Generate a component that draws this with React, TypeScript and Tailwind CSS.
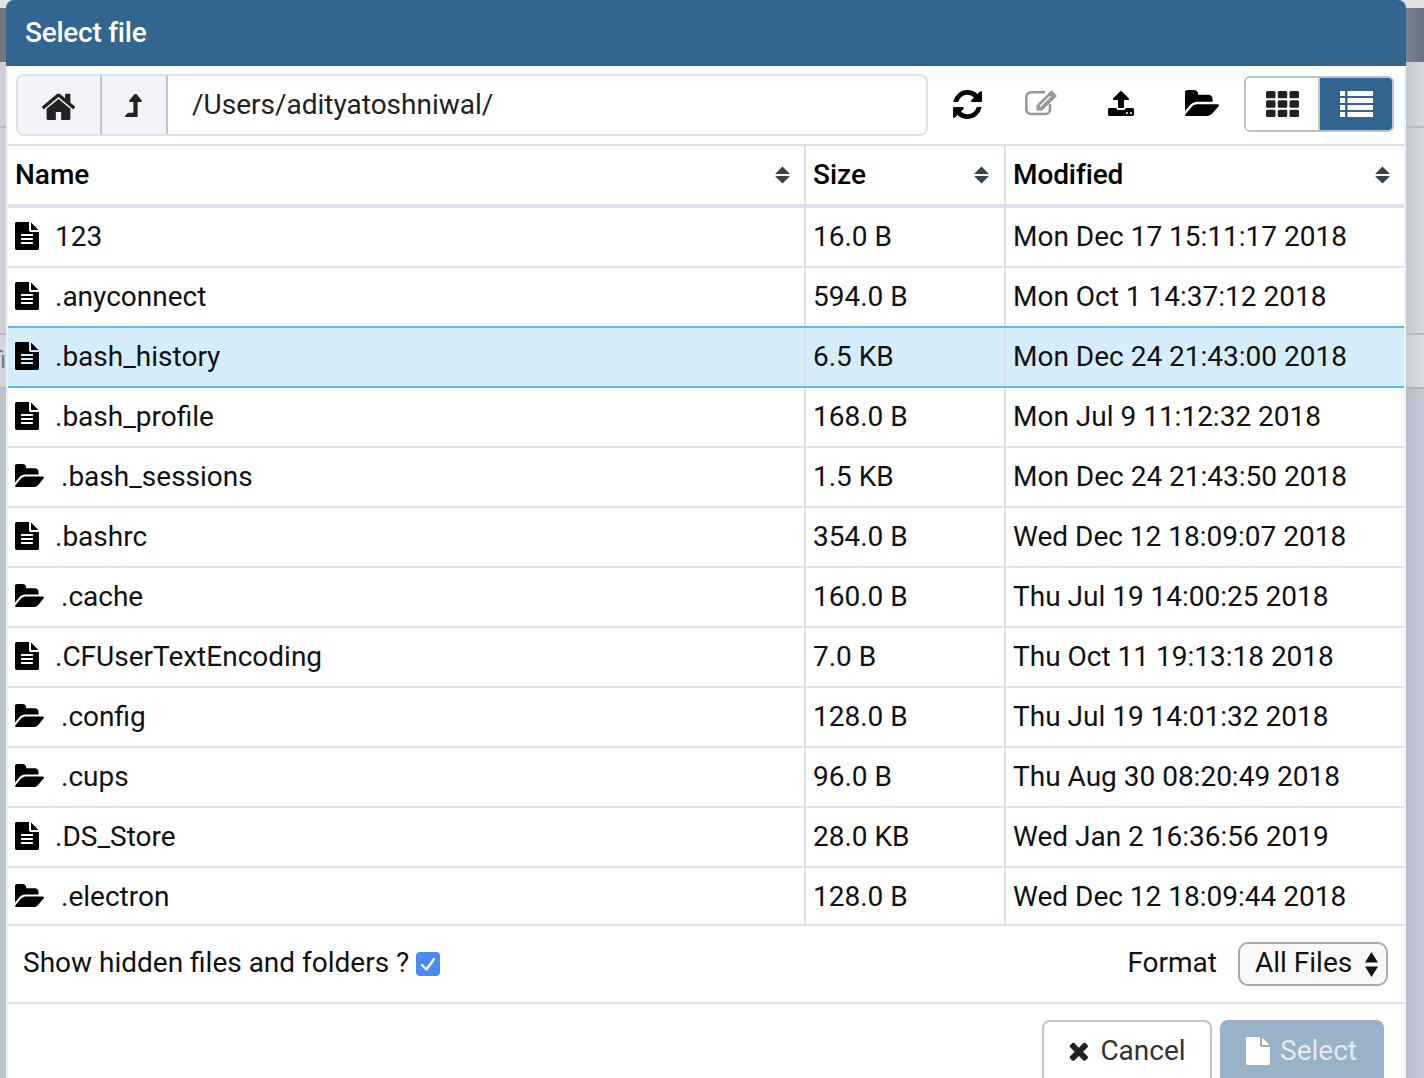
import React from 'react';
import clsx from 'clsx';

type Row = { name: string; size: string; modified: string; folder?: boolean; selected?: boolean };

const rows: Row[] = [
  { name: '123', size: '16.0 B', modified: 'Mon Dec 17 15:11:17 2018' },
  { name: '.anyconnect', size: '594.0 B', modified: 'Mon Oct 1 14:37:12 2018' },
  { name: '.bash_history', size: '6.5 KB', modified: 'Mon Dec 24 21:43:00 2018', selected: true },
  { name: '.bash_profile', size: '168.0 B', modified: 'Mon Jul 9 11:12:32 2018' },
  { name: '.bash_sessions', size: '1.5 KB', modified: 'Mon Dec 24 21:43:50 2018', folder: true },
  { name: '.bashrc', size: '354.0 B', modified: 'Wed Dec 12 18:09:07 2018' },
  { name: '.cache', size: '160.0 B', modified: 'Thu Jul 19 14:00:25 2018', folder: true },
  { name: '.CFUserTextEncoding', size: '7.0 B', modified: 'Thu Oct 11 19:13:18 2018' },
  { name: '.config', size: '128.0 B', modified: 'Thu Jul 19 14:01:32 2018', folder: true },
  { name: '.cups', size: '96.0 B', modified: 'Thu Aug 30 08:20:49 2018', folder: true },
  { name: '.DS_Store', size: '28.0 KB', modified: 'Wed Jan 2 16:36:56 2019' },
  { name: '.electron', size: '128.0 B', modified: 'Wed Dec 12 18:09:44 2018', folder: true },
];

// Font Awesome 4 shapes, the icon set this dialog uses
const icons = {
  home: 'M1472 992v480q0 26-19 45t-45 19h-384v-384h-256v384h-384q-26 0-45-19t-19-45v-480q0-1 .5-3t.5-3l575-474 575 474q1 2 1 6zm223-69l-62 74q-8 9-21 11h-3q-13 0-21-7l-692-577-692 577q-12 8-24 7-13-2-21-11l-62-74q-8-10-7-23.5t11-21.5l719-599q32-26 76-26t76 26l244 204v-195q0-14 9-23t23-9h192q14 0 23 9t9 23v408l219 182q10 8 11 21.5t-7 23.5z',
  levelUp: 'M1395 508q-17 36-58 36h-192v864q0 14-9 23t-23 9h-704q-21 0-29-18-8-20 4-35l160-192q9-11 25-11h320v-640h-192q-40 0-58-37-17-37 9-68l320-384q18-22 49-22t49 22l320 384q27 32 9 69z',
  refresh: 'M1639 1056q0 5-1 7-64 268-268 434.5t-478 166.5q-146 0-282.5-55t-243.5-157l-129 129q-19 19-45 19t-45-19-19-45v-448q0-26 19-45t45-19h448q26 0 45 19t19 45-19 45l-137 137q71 66 161 102t187 36q134 0 250-65t186-179q11-17 53-117 8-23 30-23h192q13 0 22.5 9.5t9.5 22.5zm25-800v448q0 26-19 45t-45 19h-448q-26 0-45-19t-19-45 19-45l138-138q-148-137-349-137-134 0-250 65t-186 179q-11 17-53 117-8 23-30 23h-199q-13 0-22.5-9.5t-9.5-22.5v-7q65-268 270-434.5t480-166.5q146 0 284 55.5t245 156.5l130-129q19-19 45-19t45 19 19 45z',
  upload: 'M1344 1472q0-26-19-45t-45-19-45 19-19 45 19 45 45 19 45-19 19-45zm256 0q0-26-19-45t-45-19-45 19-19 45 19 45 45 19 45-19 19-45zm128-224v320q0 40-28 68t-68 28h-1472q-40 0-68-28t-28-68v-320q0-40 28-68t68-28h427q21 56 70.5 92t110.5 36h256q61 0 110.5-36t70.5-92h427q40 0 68 28t28 68zm-325-648q-17 40-59 40h-256v448q0 26-19 45t-45 19h-256q-26 0-45-19t-19-45v-448h-256q-42 0-59-40-17-39 14-69l448-448q18-19 45-19t45 19l448 448q31 30 14 69z',
  folderOpen: 'M1815 952q0 31-31 66l-336 396q-43 51-120.5 86.5t-143.5 35.5h-1088q-34 0-60.5-13t-26.5-43q0-31 31-66l336-396q43-51 120.5-86.5t143.5-35.5h1088q34 0 60.5 13t26.5 43zm-343-344v160h-832q-94 0-197 47.5t-164 119.5l-337 396-5 6q0-4-.5-12.5t-.5-12.5v-960q0-92 66-158t158-66h320q92 0 158 66t66 158v32h544q92 0 158 66t66 158z',
  fileText: 'M1596 476q14 14 28 36h-472v-472q22 14 36 28zm-476 164h544v1056q0 40-28 68t-68 28h-1344q-40 0-68-28t-28-68v-1600q0-40 28-68t68-28h800v544q0 40 28 68t68 28zm160 736v-64q0-14-9-23t-23-9h-704q-14 0-23 9t-9 23v64q0 14 9 23t23 9h704q14 0 23-9t9-23zm0-256v-64q0-14-9-23t-23-9h-704q-14 0-23 9t-9 23v64q0 14 9 23t23 9h704q14 0 23-9t9-23zm0-256v-64q0-14-9-23t-23-9h-704q-14 0-23 9t-9 23v64q0 14 9 23t23 9h704q14 0 23-9t9-23z',
  file: 'M1024 512v-472q22 14 36 28l408 408q14 14 28 36h-472zm-128 32q0 40 28 68t68 28h544v1056q0 40-28 68t-68 28h-1344q-40 0-68-28t-28-68v-1600q0-40 28-68t68-28h800v544z',
  times: 'M1490 1322q0 40-28 68l-136 136q-28 28-68 28t-68-28l-294-294-294 294q-28 28-68 28t-68-28l-136-136q-28-28-28-68t28-68l294-294-294-294q-28-28-28-68t28-68l136-136q28-28 68-28t68 28l294 294 294-294q28-28 68-28t68 28l136 136q28 28 28 68t-28 68l-294 294 294 294q28 28 28 68z',
};

const Glyph: React.FC<{ d: string; viewBox: string; className: string }> = ({ d, viewBox, className }) => (
  <svg viewBox={viewBox} className={className} fill="currentColor" preserveAspectRatio="none">
    <path d={d} />
  </svg>
);

const EditIcon = () => (
  <svg viewBox="0 0 32 26" className="mb-[4px] ml-[43px] h-[26px] w-[32px] text-[#999]">
    <path
      d="M20 2.3H6a4.7 4.7 0 0 0-4.7 4.7V19.3a4.7 4.7 0 0 0 4.7 4.7H20.3a4.7 4.7 0 0 0 4.7-4.7V14"
      fill="none"
      stroke="currentColor"
      strokeWidth="2.6"
    />
    <path d="M11.5 15.2 25.6 1.1Q26.4 .4 27.2 1.1L31.3 5.2Q32 6 31.3 6.8L17 20.8H11.5Z" fill="currentColor" />
    <path d="M15 16.5 25.5 6" fill="none" stroke="#fff" strokeWidth="1.2" />
  </svg>
);

const SortIcon = () => (
  <svg viewBox="0 0 15 18" className="ml-auto h-[18px] w-[15px] shrink-0" fill="#36424c">
    <path d="M7.5 0.5 14.5 7.5Q15 8 14 8H1Q0 8 0.5 7.5ZM1 10H14Q15 10 14.5 10.5L7.5 17.5 0.5 10.5Q0 10 1 10Z" />
  </svg>
);

const GridIcon = () => (
  <svg viewBox="0 0 33 26" className="h-[26px] w-[33px]" fill="#222">
    {[0, 11.75, 23.5].map((x) =>
      [0, 9.33, 18.66].map((y) => <rect key={`${x}-${y}`} x={x} y={y} width="9.5" height="7.33" rx="1.5" />)
    )}
  </svg>
);

const ListIcon = () => (
  <svg viewBox="0 0 33 26" className="h-[26px] w-[33px]" fill="#fff">
    {[0, 7, 14, 21].map((y) => (
      <g key={y}>
        <rect x="0" y={y} width="5" height="5" />
        <rect x="7.5" y={y} width="25.5" height="5" />
      </g>
    ))}
  </svg>
);

const LeftStrip = () => (
  <div className="flex w-[6px] shrink-0 flex-col overflow-hidden">
    <div className="h-[8px] bg-[#dfe1e7]"></div>
    <div className="h-[54px] bg-[#6e7984]"></div>
    <div className="h-[64px] bg-[#cdd0d9]"></div>
    <div className="h-[2px] bg-[#b4b9c5]"></div>
    <div className="h-[205px] bg-[#cdd0d9]"></div>
    <div className="h-[2px] bg-[#b4b9c5]"></div>
    <div className="flex h-[52px] items-center justify-end bg-[#d3d6dd] pb-[2px] text-[24px] leading-none text-[#777]">
      <span className="shrink-0">fi</span>
    </div>
    <div className="h-[2px] bg-[#b4b9c5]"></div>
    <div className="flex-1 bg-[#bcc3d0]"></div>
  </div>
);

const RightStrip = () => (
  <div className="flex flex-1 flex-col">
    <div className="h-[8px] bg-[#e0e2e8]"></div>
    <div className="h-[54px] bg-gradient-to-r from-[#78838e] to-[#67727d]"></div>
    <div className="h-[64px] bg-gradient-to-r from-[#c4c8d2] to-[#d8dae0]"></div>
    <div className="h-[2px] bg-[#b6bbc7]"></div>
    <div className="h-[205px] bg-gradient-to-r from-[#c4c8d2] to-[#d8dae0]"></div>
    <div className="h-[2px] bg-[#b6bbc7]"></div>
    <div className="h-[52px] bg-gradient-to-r from-[#c8ccd5] to-[#dcdee3]"></div>
    <div className="h-[2px] bg-[#aeb4c1]"></div>
    <div className="flex-1 bg-gradient-to-r from-[#b7bdca] to-[#c6cad5]"></div>
  </div>
);

const App: React.FC = () => {
  return (
    <div className="flex h-[1078px] w-[1424px] overflow-hidden bg-[#e0e2e8] font-['Roboto',sans-serif] text-[28px] text-[#111]">
      <LeftStrip />
      <div className="flex w-[1400px] shrink-0 flex-col">
        <div className="flex h-[66px] shrink-0 items-center rounded-t-[8px] bg-[#326690] pl-[19px] font-medium tracking-[-0.25px] text-white">Select file</div>

        <div className="flex flex-1 flex-col border-x-2 border-[#eef0f3] bg-white">
          <div className="flex h-[78px] shrink-0 items-center pl-[8px]">
            <div className="flex h-[62px] w-[912px] overflow-hidden rounded-[8px] border-2 border-[#dde0e8]">
              <div className="flex w-[84px] items-center justify-center border-r-2 border-[#c0c5d0] bg-[#f3f4f8] pr-[2px] text-[#222]">
                <Glyph d={icons.home} viewBox="96 128 1600 1408" className="h-[29px] w-[33px]" />
              </div>
              <div className="flex w-[66px] items-center justify-center border-r-2 border-[#c0c5d0] bg-[#f3f4f8] pr-[2px] text-[#222]">
                <Glyph d={icons.levelUp} viewBox="380 64 1030 1376" className="h-[23px] w-[17px]" />
              </div>
              <div className="flex flex-1 items-center pl-[24px] text-[#222]">/Users/adityatoshniwal/</div>
            </div>
            <Glyph d={icons.refresh} viewBox="128 128 1536 1536" className="mb-[2px] ml-[25px] h-[29px] w-[29px] text-black" />
            <EditIcon />
            <Glyph d={icons.upload} viewBox="64 64 1664 1600" className="mb-[4px] ml-[51px] h-[25px] w-[26px] text-black" />
            <Glyph d={icons.folderOpen} viewBox="0 128 1815 1408" className="mb-[4px] ml-[51px] h-[26px] w-[34px] text-black" />
            <div className="mb-[2px] ml-[25px] flex h-[56px] w-[150px] overflow-hidden rounded-[6px] border-2 border-[#bcc3d0]">
              <div className="flex w-[74px] items-center justify-center border-r-2 border-[#bcc3d0] bg-white"><GridIcon /></div>
              <div className="flex flex-1 items-center justify-center bg-[#326690]"><ListIcon /></div>
            </div>
          </div>

          <div className="flex h-[64px] shrink-0 border-t-2 border-b-4 border-[#dde0e8] font-medium text-black">
            <div className="flex w-[796px] items-center pr-[14px] pl-[7px]">Name<SortIcon /></div>
            <div className="flex w-[200px] items-center border-l-2 border-[#dde0e8] pr-[15px] pl-[7px]">Size<SortIcon /></div>
            <div className="flex flex-1 items-center border-l-2 border-[#dde0e8] pr-[14px] pl-[7px] tracking-[-0.1px]">Modified<SortIcon /></div>
          </div>

          {rows.map((row, i) => {
            // the last row is cut 2px short, its text stays where a full row would put it
            const last = i === rows.length - 1;
            return (
              <div
                key={row.name}
                className={clsx(
                  'flex shrink-0',
                  row.selected ? '-mt-[2px] h-[62px] border-y-2 border-[#5bbdf0] bg-[#d5edfa]' : 'border-b-2 border-[#dfe2e8]',
                  !row.selected && (last ? 'h-[58px]' : 'h-[60px]')
                )}
              >
                <div className={clsx('flex w-[796px] items-center pl-[7px]', last && 'pt-[2px]')}>
                  {row.folder ? (
                    <Glyph d={icons.folderOpen} viewBox="0 128 1815 1408" className="mr-[17px] mb-[4px] h-[23px] w-[29px] text-black" />
                  ) : (
                    <Glyph d={icons.fileText} viewBox="128 0 1536 1792" className="mr-[16px] mb-[2px] h-[28px] w-[24px] text-black" />
                  )}
                  {row.name}
                </div>
                <div className={clsx('flex w-[200px] items-center border-l-2 border-[#dde0e8] pl-[7px]', last && 'pt-[2px]')}>{row.size}</div>
                <div className={clsx('flex flex-1 items-center border-l-2 border-[#dde0e8] pl-[7px]', last && 'pt-[2px]')}>{row.modified}</div>
              </div>
            );
          })}

          <div className="flex h-[78px] shrink-0 items-center border-b-2 border-[#dde0e8] pr-[16px] pl-[15px]">
            <span className="mb-[2px]">Show hidden files and folders ?</span>
            <span className="ml-[7px] flex h-[24px] w-[24px] items-center justify-center rounded-[4px] bg-[#4a8af4]">
              <svg viewBox="0 0 24 24" className="h-[24px] w-[24px]" fill="none" stroke="#fff" strokeWidth="2.4" strokeLinecap="round" strokeLinejoin="round">
                <path d="M6 13 10.5 17.5 18 7" />
              </svg>
            </span>
            <span className="mb-[2px] ml-auto">Format</span>
            <div className="ml-[21px] flex h-[44px] w-[150px] items-center rounded-[10px] border-2 border-[#aaa] bg-[#f8f8f8] pb-[2px] pl-[15px]">
              All Files
              <svg viewBox="0 0 13 25" className="mt-[2px] ml-[13px] h-[25px] w-[13px]"><path d="M6.5 0 13 10.5H0ZM0 14.5H13L6.5 25Z" fill="#111" /></svg>
            </div>
          </div>

          <div className="flex justify-end gap-[8px] pt-[16px] pr-[20px]">
            <div className="flex h-[70px] w-[170px] items-start justify-center rounded-[8px] border-2 border-[#c0c5d0] pt-[8px] text-[#333]">
              <div className="flex h-[42px] items-center gap-[12px]">
                <Glyph d={icons.times} viewBox="190 256 1300 1300" className="h-[20px] w-[20px] text-[#222]" />
                Cancel
              </div>
            </div>
            <div className="flex h-[70px] w-[164px] items-start justify-center rounded-[8px] bg-[#9ab2c7] pt-[10px] pr-[1px] text-[#e4eaf0]">
              <div className="flex h-[42px] items-center gap-[10px]">
                <Glyph d={icons.file} viewBox="0 0 1536 1792" className="h-[28px] w-[24px] text-white" />
                Select
              </div>
            </div>
          </div>
        </div>
      </div>
      <RightStrip />
    </div>
  );
};

export default App;
